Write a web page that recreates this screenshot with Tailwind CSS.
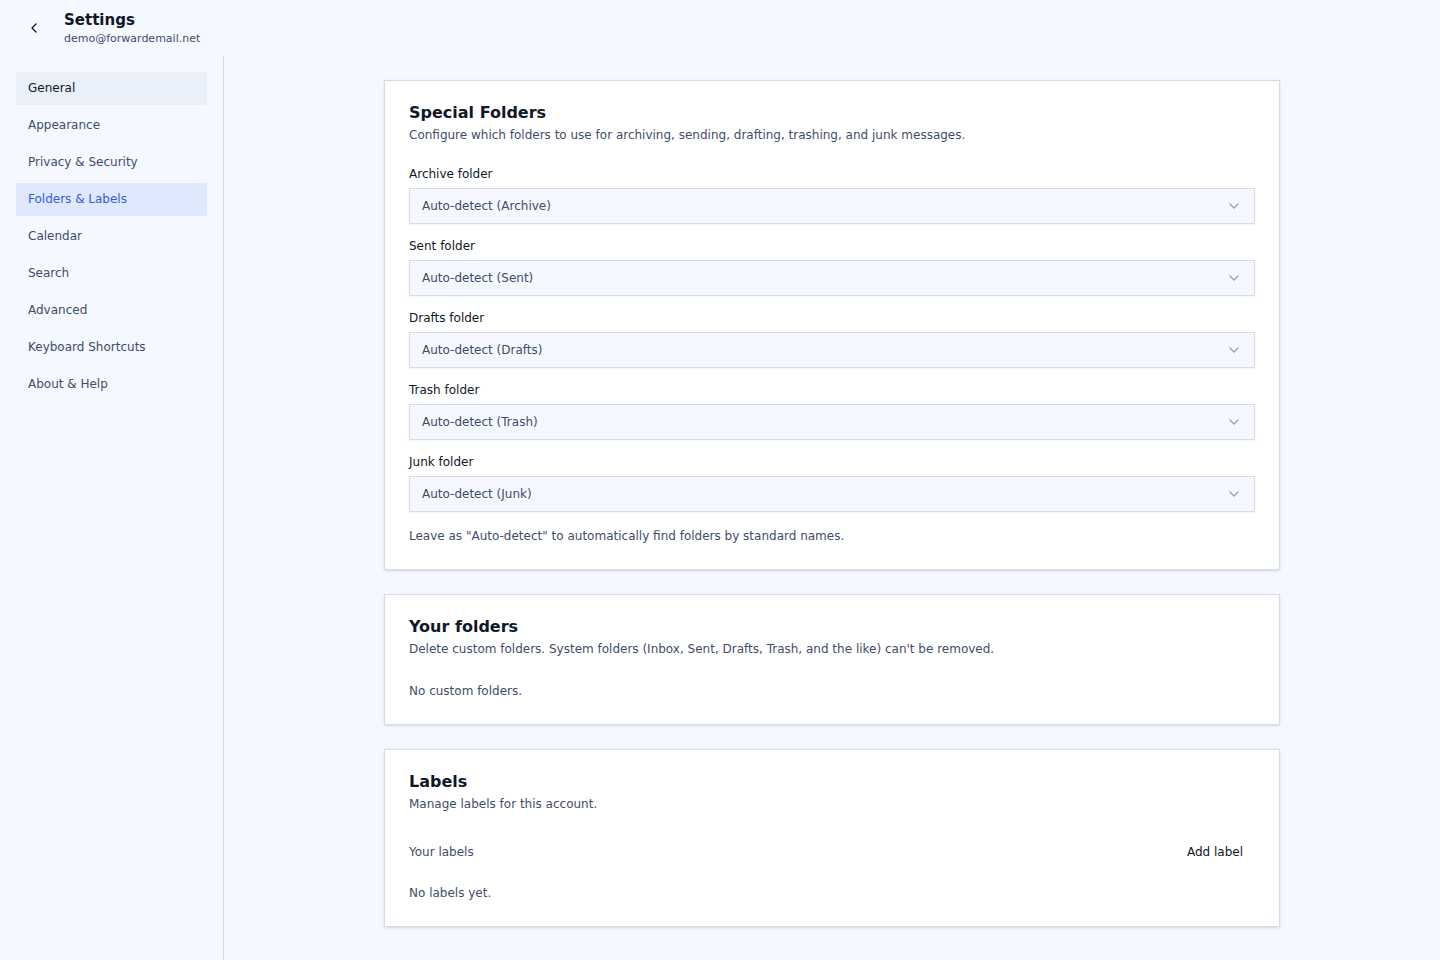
<!DOCTYPE html>
<html lang="en">
<head>
<meta charset="utf-8">
<meta name="viewport" content="width=device-width, initial-scale=1">
<title>Settings</title>
<script src="https://cdn.jsdelivr.net/npm/@tailwindcss/browser@4"></script>
</head>
<body class="flex min-h-screen flex-col bg-[#f5f8ff] font-['DejaVu_Sans',sans-serif] text-xs text-[#0f1729]">
  <header class="flex h-14 items-center gap-3 px-4">
    <button type="button" aria-label="Back" class="flex size-9 items-center justify-center">
      <svg class="size-4" viewBox="0 0 24 24" fill="none" stroke="currentColor" stroke-width="2" stroke-linecap="round" stroke-linejoin="round" aria-hidden="true"><path d="m15 18-6-6 6-6"/></svg>
    </button>
    <div>
      <h1 class="text-[15px] leading-[22px] font-bold">Settings</h1>
      <p class="text-[11px] leading-4 text-[#3f4c6b]">demo@forwardemail.net</p>
    </div>
  </header>
  <div class="flex flex-1">
    <nav aria-label="Settings sections" class="flex w-56 shrink-0 flex-col gap-1 border-r border-[#d6dce9] p-4 text-[#3f4c6b]">
      <a href="#general" class="bg-[#eaf0fa] px-3 py-2 leading-[17px] text-[#0f1729]">General</a>
      <a href="#appearance" class="px-3 py-2 leading-[17px]">Appearance</a>
      <a href="#privacy" class="px-3 py-2 leading-[17px]">Privacy &amp; Security</a>
      <a href="#folders" aria-current="page" class="bg-[#dfe8fd] px-3 py-2 leading-[17px] text-[#2f5fd8]">Folders &amp; Labels</a>
      <a href="#calendar" class="px-3 py-2 leading-[17px]">Calendar</a>
      <a href="#search" class="px-3 py-2 leading-[17px]">Search</a>
      <a href="#advanced" class="px-3 py-2 leading-[17px]">Advanced</a>
      <a href="#shortcuts" class="px-3 py-2 leading-[17px]">Keyboard Shortcuts</a>
      <a href="#about" class="px-3 py-2 leading-[17px]">About &amp; Help</a>
    </nav>
    <main class="min-w-0 flex-1 p-6">
      <div class="mx-auto flex max-w-4xl flex-col gap-6">
        <section class="flex flex-col gap-6 border border-[#d6dce9] bg-white p-6 shadow-sm">
          <div class="flex flex-col gap-1.5">
            <h2 class="text-base leading-4 font-bold">Special Folders</h2>
            <p class="leading-[17px] text-[#3f4c6b]">Configure which folders to use for archiving, sending, drafting, trashing, and junk messages.</p>
          </div>
          <div class="flex flex-col gap-4">
            <div class="flex flex-col gap-2">
              <label for="archive" class="leading-3">Archive folder</label>
              <div class="relative">
                <select id="archive" class="block h-9 w-full appearance-none border border-[#d6dce9] bg-[#f5f8ff] px-3 text-[#3f4c6b] shadow-xs"><option>Auto-detect (Archive)</option></select>
                <svg class="pointer-events-none absolute top-2.5 right-[13px] size-4 opacity-50" viewBox="0 0 24 24" fill="none" stroke="#3f4c6b" stroke-width="2" stroke-linecap="round" stroke-linejoin="round" aria-hidden="true"><path d="m6 9 6 6 6-6"/></svg>
              </div>
            </div>
            <div class="flex flex-col gap-2">
              <label for="sent" class="leading-3">Sent folder</label>
              <div class="relative">
                <select id="sent" class="block h-9 w-full appearance-none border border-[#d6dce9] bg-[#f5f8ff] px-3 text-[#3f4c6b] shadow-xs"><option>Auto-detect (Sent)</option></select>
                <svg class="pointer-events-none absolute top-2.5 right-[13px] size-4 opacity-50" viewBox="0 0 24 24" fill="none" stroke="#3f4c6b" stroke-width="2" stroke-linecap="round" stroke-linejoin="round" aria-hidden="true"><path d="m6 9 6 6 6-6"/></svg>
              </div>
            </div>
            <div class="flex flex-col gap-2">
              <label for="drafts" class="leading-3">Drafts folder</label>
              <div class="relative">
                <select id="drafts" class="block h-9 w-full appearance-none border border-[#d6dce9] bg-[#f5f8ff] px-3 text-[#3f4c6b] shadow-xs"><option>Auto-detect (Drafts)</option></select>
                <svg class="pointer-events-none absolute top-2.5 right-[13px] size-4 opacity-50" viewBox="0 0 24 24" fill="none" stroke="#3f4c6b" stroke-width="2" stroke-linecap="round" stroke-linejoin="round" aria-hidden="true"><path d="m6 9 6 6 6-6"/></svg>
              </div>
            </div>
            <div class="flex flex-col gap-2">
              <label for="trash" class="leading-3">Trash folder</label>
              <div class="relative">
                <select id="trash" class="block h-9 w-full appearance-none border border-[#d6dce9] bg-[#f5f8ff] px-3 text-[#3f4c6b] shadow-xs"><option>Auto-detect (Trash)</option></select>
                <svg class="pointer-events-none absolute top-2.5 right-[13px] size-4 opacity-50" viewBox="0 0 24 24" fill="none" stroke="#3f4c6b" stroke-width="2" stroke-linecap="round" stroke-linejoin="round" aria-hidden="true"><path d="m6 9 6 6 6-6"/></svg>
              </div>
            </div>
            <div class="flex flex-col gap-2">
              <label for="junk" class="leading-3">Junk folder</label>
              <div class="relative">
                <select id="junk" class="block h-9 w-full appearance-none border border-[#d6dce9] bg-[#f5f8ff] px-3 text-[#3f4c6b] shadow-xs"><option>Auto-detect (Junk)</option></select>
                <svg class="pointer-events-none absolute top-2.5 right-[13px] size-4 opacity-50" viewBox="0 0 24 24" fill="none" stroke="#3f4c6b" stroke-width="2" stroke-linecap="round" stroke-linejoin="round" aria-hidden="true"><path d="m6 9 6 6 6-6"/></svg>
              </div>
            </div>
            <p class="leading-[17px] text-[#3f4c6b]">Leave as "Auto-detect" to automatically find folders by standard names.</p>
          </div>
        </section>
        <section class="flex flex-col gap-6 border border-[#d6dce9] bg-white p-6 shadow-sm">
          <div class="flex flex-col gap-1.5">
            <h2 class="text-base leading-4 font-bold">Your folders</h2>
            <p class="leading-[17px] text-[#3f4c6b]">Delete custom folders. System folders (Inbox, Sent, Drafts, Trash, and the like) can't be removed.</p>
          </div>
          <p class="leading-[18px] text-[#3f4c6b]">No custom folders.</p>
        </section>
        <section class="flex flex-col gap-6 border border-[#d6dce9] bg-white p-6 shadow-sm">
          <div class="flex flex-col gap-1.5">
            <h2 class="text-base leading-4 font-bold">Labels</h2>
            <p class="leading-[17px] text-[#3f4c6b]">Manage labels for this account.</p>
          </div>
          <div class="flex flex-col gap-[18px]">
            <div class="flex items-center justify-between">
              <p class="leading-[17px] text-[#3f4c6b]">Your labels</p>
              <button type="button" class="h-[30px] px-3">Add label</button>
            </div>
            <p class="leading-[17px] text-[#3f4c6b]">No labels yet.</p>
          </div>
        </section>
      </div>
    </main>
  </div>
</body>
</html>
